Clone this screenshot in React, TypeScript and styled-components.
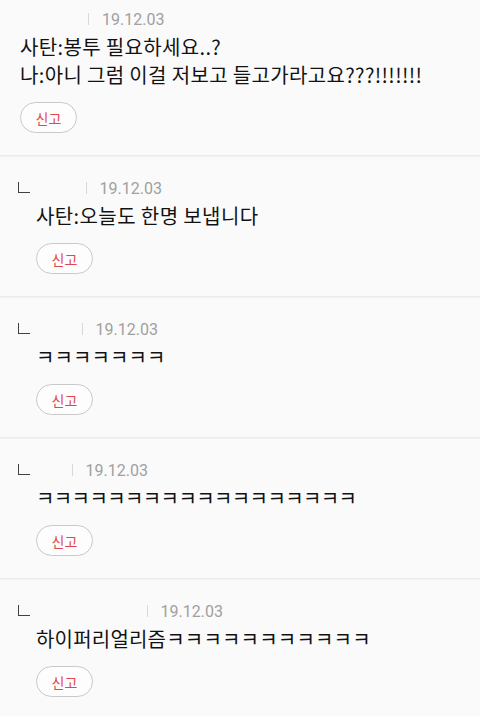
import React from "react"
import styled, { createGlobalStyle } from "styled-components"

const GlobalStyle = createGlobalStyle`
  html, body {
    margin: 0;
    padding: 0;
    background: #fafafa;
    overflow: hidden;
  }
  body {
    font-family: "Noto Sans CJK KR", "Noto Sans", sans-serif;
  }
`

interface Comment {
  reply: boolean
  nameWidth: number
  date: string
  lines: string[]
  spacing: number
}

const comments: Comment[] = [
  {
    reply: false,
    nameWidth: 68,
    date: "19.12.03",
    lines: ["사탄:봉투 필요하세요..?", "나:아니 그럼 이걸 저보고 들고가라고요???!!!!!!!"],
    spacing: 0.35,
  },
  { reply: true, nameWidth: 56, date: "19.12.03", lines: ["사탄:오늘도 한명 보냅니다"], spacing: 0.4 },
  { reply: true, nameWidth: 52, date: "19.12.03", lines: ["ㅋㅋㅋㅋㅋㅋㅋ"], spacing: 0.1 },
  { reply: true, nameWidth: 42, date: "19.12.03", lines: ["ㅋㅋㅋㅋㅋㅋㅋㅋㅋㅋㅋㅋㅋㅋㅋㅋㅋㅋ"], spacing: -0.6 },
  { reply: true, nameWidth: 117, date: "19.12.03", lines: ["하이퍼리얼리즘ㅋㅋㅋㅋㅋㅋㅋㅋㅋㅋㅋ"], spacing: 0.2 },
]

const List = styled.div`
  margin-top: -13px;
`

const Item = styled.div`
  padding: 21px 0 22px 18px;
  border-bottom: 1px solid #ececec;
  box-shadow: 0 1px 0 #f3f3f3;
`

const Header = styled.div<{ $reply: boolean }>`
  display: flex;
  align-items: center;
  height: 22px;
  margin-bottom: 3px;
  padding-left: ${p => (p.$reply ? 0 : 2)}px;
`

const ReplyMark = styled.span`
  display: inline-block;
  width: 10.5px;
  height: 10.5px;
  margin-bottom: 1px;
  border-left: 1.5px solid #404040;
  border-bottom: 1.5px solid #404040;
`

const Name = styled.span<{ $w: number }>`
  display: inline-block;
  width: ${p => p.$w}px;
`

const Divider = styled.span`
  display: inline-block;
  width: 1px;
  height: 12px;
  background: #d8d8d8;
  margin-right: 13px;
`

const DateText = styled.span`
  font-family: Roboto, "Liberation Sans", sans-serif;
  font-size: 16px;
  color: #a0a0a0;
`

const Body = styled.div<{ $reply: boolean }>`
  padding-left: ${p => (p.$reply ? 18 : 2)}px;
`

const Line = styled.div<{ $spacing: number }>`
  font-size: 20px;
  line-height: 28px;
  letter-spacing: ${p => p.$spacing}px;
  color: #121212;
  white-space: nowrap;
`

const ReportButton = styled.button`
  margin-top: 13px;
  width: 57px;
  height: 31px;
  border: 1px solid #c9c9c9;
  border-radius: 16px;
  background: #fdfdfd;
  color: #e2474d;
  font-family: "Noto Sans CJK KR", sans-serif;
  font-size: 14px;
  padding: 0;
  display: flex;
  align-items: center;
  justify-content: center;
`

export default function App() {
  return (
    <>
      <GlobalStyle />
      <List>
        {comments.map((c, i) => (
          <Item key={i}>
            <Header $reply={c.reply}>
              {c.reply && <ReplyMark />}
              <Name $w={c.nameWidth} />
              <Divider />
              <DateText>{c.date}</DateText>
            </Header>
            <Body $reply={c.reply}>
              {c.lines.map((l, j) => (
                <Line key={j} $spacing={c.spacing}>{l}</Line>
              ))}
              <ReportButton>신고</ReportButton>
            </Body>
          </Item>
        ))}
      </List>
    </>
  )
}
